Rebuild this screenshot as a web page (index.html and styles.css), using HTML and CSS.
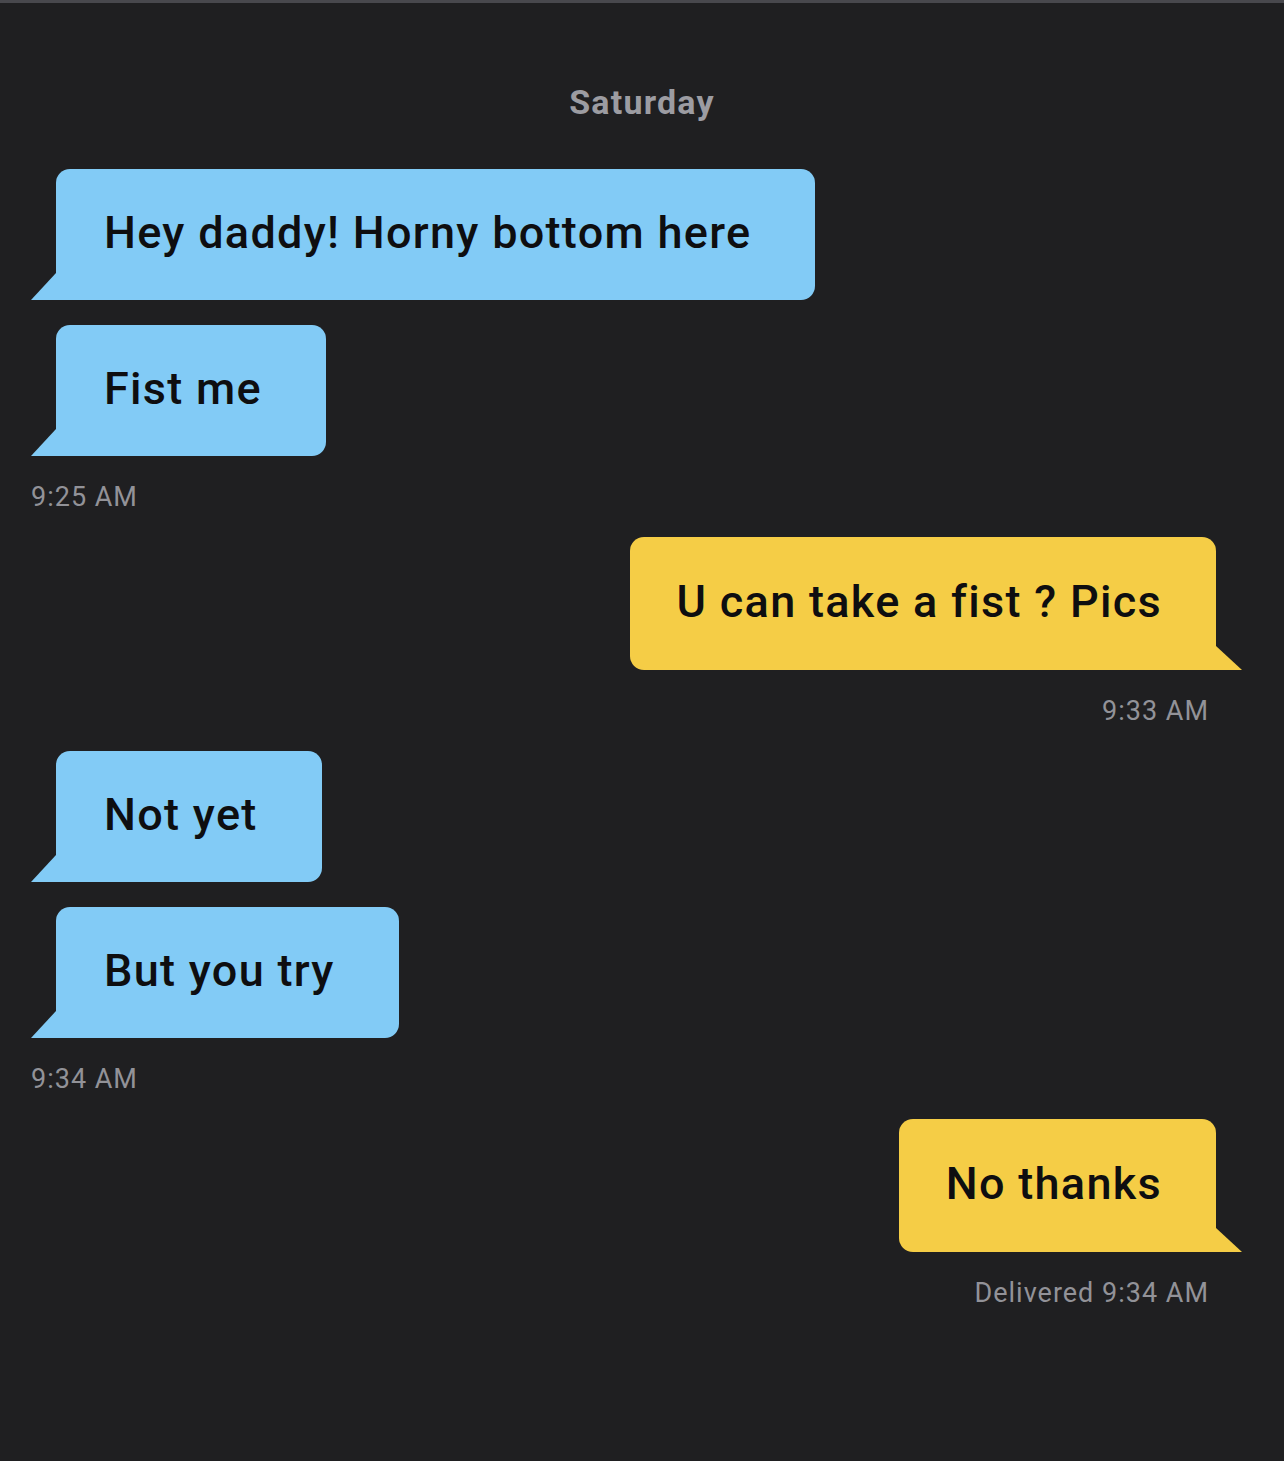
FILE: index.html
```html
<!DOCTYPE html>
<html>
<head>
    <title>Chat</title>
    <link rel="stylesheet" href="styles.css">
</head>
<body>
    <div class="chat">
        <div class="day">Saturday</div>

        <div class="bubble them">Hey daddy! Horny bottom here</div>
        <div class="bubble them">Fist me</div>
        <div class="time left">9:25 AM</div>

        <div class="bubble me">U can take a fist ? Pics</div>
        <div class="time right">9:33 AM</div>

        <div class="bubble them">Not yet</div>
        <div class="bubble them">But you try</div>
        <div class="time left">9:34 AM</div>

        <div class="bubble me">No thanks</div>
        <div class="time right">Delivered 9:34 AM</div>
    </div>
</body>
</html>
```

FILE: styles.css
```css
/* General */
body {
    margin: 0;
    background-color: #1f1f21;
    border-top: 3px solid #48484d;
    font-family: Roboto, "Noto Sans", sans-serif;
    min-height: 1458px;
}

.chat {
    display: flex;
    flex-direction: column;
    padding: 0 0 100px 0;
}

/* Day header */
.day {
    margin-top: 79px;
    margin-bottom: 47px;
    text-align: center;
    color: #9c9ca2;
    font-size: 34px;
    font-weight: 700;
    line-height: 40px;
    letter-spacing: 1.2px;
}

/* Bubbles */
.bubble {
    position: relative;
    display: flex;
    align-items: center;
    height: 131px;
    box-sizing: border-box;
    padding: 0 64px 4px 48px;
    font-size: 45px;
    font-weight: 500;
    letter-spacing: 1.3px;
    color: #0e0e10;
    border-radius: 14px;
}

.bubble + .bubble {
    margin-top: 25px;
}

.them {
    align-self: flex-start;
    margin-left: 56px;
    background-color: #82cbf6;
    border-bottom-left-radius: 0;
}

.them::before {
    content: "";
    position: absolute;
    left: -25px;
    bottom: 0;
    border-bottom: 27px solid #82cbf6;
    border-left: 25px solid transparent;
}

.me {
    align-self: flex-end;
    margin-right: 68px;
    height: 133px;
    padding: 0 54px 4px 47px;
    background-color: #f5cd46;
    border-bottom-right-radius: 0;
}

.me::after {
    content: "";
    position: absolute;
    right: -26px;
    bottom: 0;
    border-bottom: 24px solid #f5cd46;
    border-right: 26px solid transparent;
}

/* Timestamps */
.time {
    margin-top: 24px;
    margin-bottom: 23px;
    color: #929298;
    font-size: 27px;
    line-height: 34px;
    letter-spacing: 1px;
}

.time.left {
    margin-left: 31px;
}

.time.right {
    align-self: flex-end;
    margin-right: 75px;
}
```
